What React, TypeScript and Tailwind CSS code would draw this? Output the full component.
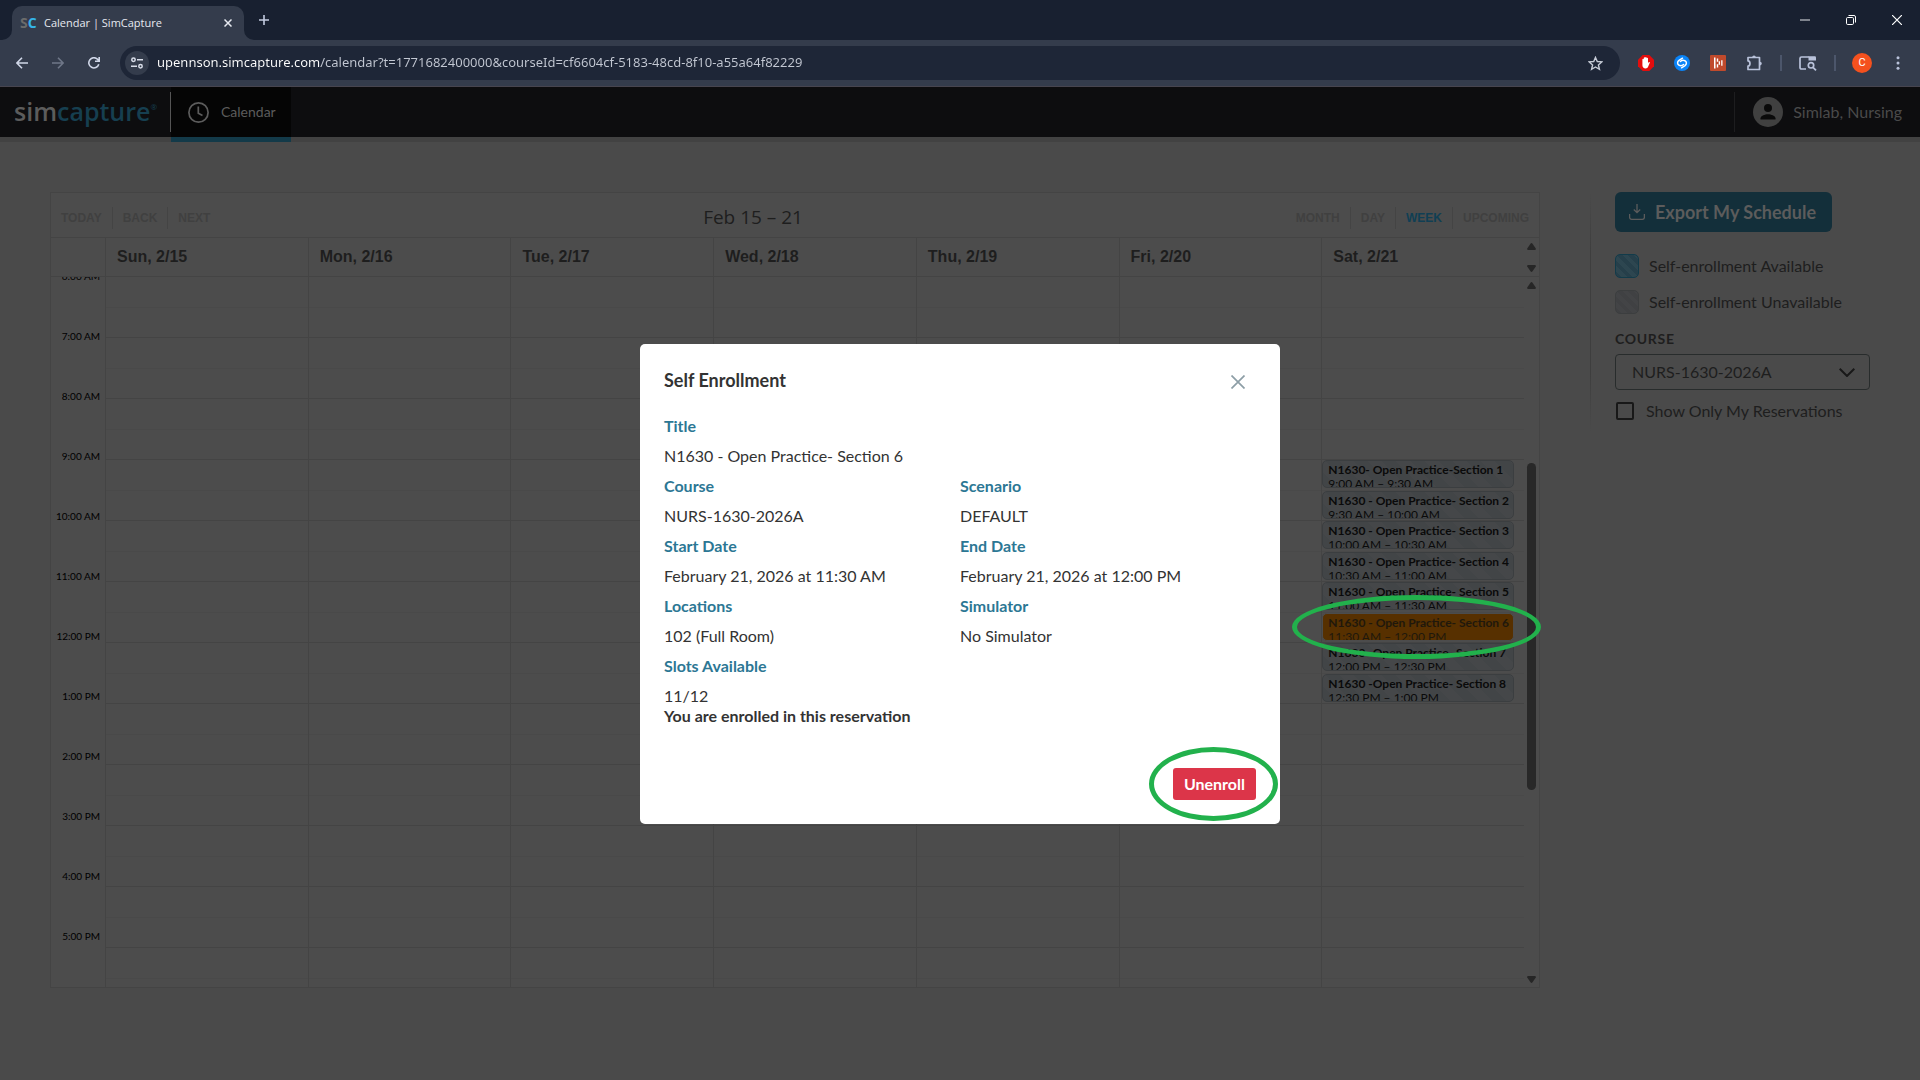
import React from "react";

const DAYS = ["Sun, 2/15", "Mon, 2/16", "Tue, 2/17", "Wed, 2/18", "Thu, 2/19", "Fri, 2/20", "Sat, 2/21"];

const HOURS = [
  "6:00 AM", "7:00 AM", "8:00 AM", "9:00 AM", "10:00 AM", "11:00 AM",
  "12:00 PM", "1:00 PM", "2:00 PM", "3:00 PM", "4:00 PM", "5:00 PM",
];

type Booking = { title: string; time: string; mine?: boolean };

// Keyed by half-hour slot, counted from 6:00 AM.
const SATURDAY: Record<number, Booking> = {
  6: { title: "N1630- Open Practice-Section 1", time: "9:00 AM – 9:30 AM" },
  7: { title: "N1630 - Open Practice- Section 2", time: "9:30 AM – 10:00 AM" },
  8: { title: "N1630 - Open Practice- Section 3", time: "10:00 AM – 10:30 AM" },
  9: { title: "N1630 - Open Practice- Section 4", time: "10:30 AM – 11:00 AM" },
  10: { title: "N1630 - Open Practice- Section 5", time: "11:00 AM – 11:30 AM" },
  11: { title: "N1630 - Open Practice- Section 6", time: "11:30 AM – 12:00 PM", mine: true },
  12: { title: "N1630 -Open Practice- Section 7", time: "12:00 PM – 12:30 PM" },
  13: { title: "N1630 -Open Practice- Section 8", time: "12:30 PM – 1:00 PM" },
};

function TabStrip() {
  return (
    <div className="flex h-10 items-end bg-[#182030] pl-3">
      <div className="relative flex h-[34px] w-[232px] items-center rounded-t-[10px] bg-[#343c4c] pr-2 pl-2">
        <svg className="absolute bottom-0 -left-[10px] size-[10px] text-[#343c4c]" viewBox="0 0 10 10" fill="currentColor">
          <path d="M10 0v10H0A10 10 0 0 0 10 0z" />
        </svg>
        <svg className="absolute -right-[10px] bottom-0 size-[10px] text-[#343c4c]" viewBox="0 0 10 10" fill="currentColor">
          <path d="M0 0v10h10A10 10 0 0 1 0 0z" />
        </svg>
        <span className="w-6 font-['Open_Sans',sans-serif] text-sm leading-4 font-bold text-[#6b6b6b]">
          S<span className="text-[#35b4e8]">C</span>
        </span>
        <span className="flex-1 font-['Open_Sans',sans-serif] text-[11px] leading-4 text-[#e6e9f0]">Calendar | SimCapture</span>
        <button aria-label="Close tab" className="flex size-4 items-center justify-center text-[#e6e9f0]">
          <svg className="size-2" viewBox="0 0 8 8" stroke="currentColor" strokeWidth="1.5">
            <path d="M.5.5l7 7M7.5.5l-7 7" />
          </svg>
        </button>
      </div>
      <button aria-label="New tab" className="ml-[10px] flex h-10 w-5 items-center justify-center text-[#c3cbe0]">
        <svg className="size-[10px]" viewBox="0 0 10 10" stroke="currentColor" strokeWidth="1.6">
          <path d="M5 0v10M0 5h10" />
        </svg>
      </button>
      <div className="ml-auto flex h-10">
        <button aria-label="Minimize" className="flex w-[46px] items-center justify-center">
          <svg className="h-[10px] w-[10px]" viewBox="0 0 10 10" stroke="#9a9ea6" strokeWidth="1.6">
            <path d="M0 5h10" />
          </svg>
        </button>
        <button aria-label="Restore" className="flex w-[46px] items-center justify-center">
          <svg className="size-[10px]" viewBox="0 0 10 10" fill="none" stroke="#fff" strokeWidth="1">
            <rect x=".5" y="2.5" width="7" height="7" rx="1.2" />
            <path d="M2.5.5H8A1.5 1.5 0 0 1 9.500 2v5.500" />
          </svg>
        </button>
        <button aria-label="Close window" className="flex w-[46px] items-center justify-center">
          <svg className="size-[10px]" viewBox="0 0 10 10" stroke="#fff" strokeWidth="1.2">
            <path d="M0 0l10 10M10 0L0 10" />
          </svg>
        </button>
      </div>
    </div>
  );
}

function ToolButton({ label, children }: { label: string; children: React.ReactNode }) {
  return (
    <button aria-label={label} className="flex w-9 shrink-0 items-center justify-center text-[#b9c2da]">
      {children}
    </button>
  );
}

function Separator() {
  return (
    <div className="flex w-[18px] shrink-0 items-center justify-center">
      <div className="h-4 w-[2px] bg-[#4c566b]" />
    </div>
  );
}

function Toolbar() {
  return (
    <div className="flex h-[47px] border-b border-[#47454f] bg-[#343c4c] pr-1 pl-1">
      <ToolButton label="Back">
        <svg className="size-3" viewBox="0 0 12 12" fill="none" stroke="#d0d7e8" strokeWidth="1.6">
          <path d="M12 6H1M6 .7L.9 6 6 11.300" />
        </svg>
      </ToolButton>
      <ToolButton label="Forward">
        <svg className="size-3" viewBox="0 0 12 12" fill="none" stroke="#6f7788" strokeWidth="1.6">
          <path d="M0 6h11M6 .7L11.100 6 6 11.300" />
        </svg>
      </ToolButton>
      <ToolButton label="Reload">
        <svg className="size-3" viewBox="0 0 12 12" fill="none" stroke="#d0d7e8" strokeWidth="1.6">
          <path d="M10.800 7.300A5.100 5.100 0 1 1 9.800 2.500L11 4M11.200 0v4.300H7" />
        </svg>
      </ToolButton>
      <div className="mx-2 my-[6px] flex flex-1 items-center rounded-full bg-[#1e2637] px-[5px]">
        <button aria-label="Site information" className="flex size-6 items-center justify-center rounded-full bg-[#343c4c]">
          <svg className="size-3" viewBox="0 0 12 12" fill="none" stroke="#d9deea" strokeWidth="1.5">
            <circle cx="2.500" cy="2.800" r="1.700" />
            <path d="M6 2.800h6M0 9.200h6" />
            <circle cx="9.500" cy="9.200" r="1.700" />
          </svg>
        </button>
        <input
          aria-label="Address"
          readOnly
          value="upennson.simcapture.com/calendar?t=1771682400000&courseId=cf6604cf-5183-48cd-8f10-a55a64f82229"
          className="ml-2 flex-1 bg-[linear-gradient(90deg,#ffffff_164px,#c3c8d3_164px)] bg-clip-text font-['Noto_Sans',sans-serif] text-[13px] text-transparent outline-none"
        />
        <button aria-label="Bookmark" className="mr-3 flex size-4 items-center justify-center">
          <svg className="size-[15px]" viewBox="0 0 16 16" fill="none" stroke="#c6cbd6" strokeWidth="1.500">
            <path d="M8 1.500l1.900 4.400 4.800.4-3.600 3.200 1.100 4.700L8 11.700l-4.200 2.500 1.100-4.700L1.300 6.300l4.800-.4z" />
          </svg>
        </button>
      </div>
      <ToolButton label="Ad blocker">
        <svg className="size-4" viewBox="0 0 16 16">
          <path d="M4.700 0h6.600L16 4.700v6.600L11.300 16H4.700L0 11.300V4.700z" fill="#e40d0d" />
          <path
            d="M4.400 8.800V4.500a.7.7 0 0 1 1.400 0V3a.7.7 0 0 1 1.400 0v-.4a.7.7 0 0 1 1.400 0V3.500a.7.7 0 0 1 1.400 0v4.800l.8-1.200c.4-.5 1.300 0 1 .6l-1.700 4c-.5 1.100-1.300 1.700-2.500 1.700-2 0-3.200-1.400-3.200-3.200z"
            fill="#fff"
          />
        </svg>
      </ToolButton>
      <ToolButton label="Music finder">
        <svg className="size-4" viewBox="0 0 16 16" fill="none">
          <circle cx="8" cy="8" r="8" fill="#0a84f8" />
          <g stroke="#fff" strokeWidth="1.500" strokeLinecap="round">
            <path d="M9.600 9.500C8.500 10.400 6.800 11 5.200 10.300 3 9.200 3.200 6.600 5 5.400L8.500 3.200" />
            <path d="M6.400 6.500C7.500 5.600 9.200 5 10.800 5.700 13 6.800 12.800 9.400 11 10.600L7.500 12.800" />
          </g>
        </svg>
      </ToolButton>
      <ToolButton label="Extension">
        <svg className="size-4" viewBox="0 0 16 16">
          <rect width="16" height="16" rx="1" fill="#c04a2c" />
          <path d="M4 2.500h1.500v11H4zM6.800 3.500h1.400v3.200H6.800zM6.800 9.300h1.400v3.200H6.800zM8.700 6.200h1.300v3.600H8.700zM11.200 5.200h1.300v5.600h-1.300z" fill="#fff" />
        </svg>
      </ToolButton>
      <ToolButton label="Extensions">
        <svg className="ml-[2px] size-4" viewBox="0 0 16 16" fill="none" stroke="currentColor" strokeWidth="1.700">
          <path d="M1 2.500h11.500v12H1v-3.400c2.600-.2 2.600-5 0-5.200z" strokeLinejoin="round" />
          <path d="M5.200 2.200a1.800 1.800 0 0 1 3.600 0zM13 6.800a1.800 1.800 0 0 1 0 3.600z" fill="currentColor" stroke="none" />
        </svg>
      </ToolButton>
      <Separator />
      <ToolButton label="Search this page">
        <svg className="h-4 w-[18px]" viewBox="0 0 18 16" fill="none" stroke="currentColor" strokeWidth="1.700">
          <path d="M7 14H2.500A1.500 1.500 0 0 1 1 12.500v-9A1.500 1.500 0 0 1 2.500 2H10" />
          <path d="M9.500 1.200h6.300a1.200 1.200 0 0 1 1.200 1.200v3H9.500z" fill="currentColor" stroke="none" />
          <circle cx="12" cy="10.300" r="2.700" />
          <path d="M14 12.300l3 3" />
        </svg>
      </ToolButton>
      <Separator />
      <ToolButton label="Profile">
        <span className="flex size-5 items-center justify-center rounded-full bg-[#f4511e] font-['Roboto',sans-serif] text-[11px] text-white">C</span>
      </ToolButton>
      <ToolButton label="Menu">
        <svg className="h-[14px] w-1" viewBox="0 0 4 14" fill="currentColor">
          <circle cx="2" cy="1.700" r="1.500" />
          <circle cx="2" cy="7" r="1.500" />
          <circle cx="2" cy="12.300" r="1.500" />
        </svg>
      </ToolButton>
    </div>
  );
}

function SiteHeader() {
  return (
    <header className="flex h-[55px] border-b-[5px] border-[#424242] bg-[#0d0d0f]">
      <a href="#" className="flex w-[155px] items-center pb-[2px] pl-[14px] font-['Open_Sans',sans-serif] text-[25px] leading-none font-semibold text-[#5c5c5c]">
        sim<span className="text-[#163f50]">capture</span>
        <sup className="text-[8px] font-normal text-[#163f50]">®</sup>
      </a>
      <div className="my-[5px] ml-[15px] w-px bg-[#555555]" />
      <a href="#" className="-mb-[5px] flex items-center border-b-[5px] border-[#133a49] bg-[#050505] pr-[15px] pl-[17px] text-sm text-[#5c5c5c]">
        <svg className="mr-3 size-[21px]" viewBox="0 0 21 21" fill="none" stroke="currentColor" strokeWidth="1.700">
          <circle cx="10.500" cy="10.500" r="9.600" />
          <path d="M10.300 4.500v6.800l4.200 2.200" />
        </svg>
        Calendar
      </a>
      <div className="my-[5px] ml-auto w-px bg-[#1d1d1f]" />
      <button className="flex items-center gap-[10px] pr-[18px] pl-[18px] text-base text-[#4a4a4a]">
        <svg className="size-[30px]" viewBox="0 0 30 30">
          <circle cx="15" cy="15" r="15" fill="#404040" />
          <circle cx="15" cy="11" r="4" fill="#0a0a0a" />
          <path d="M7.500 22.500v-1.200c0-2.400 4.500-4 7.500-4s7.500 1.600 7.500 4v1.200z" fill="#0a0a0a" />
        </svg>
        Simlab, Nursing
      </button>
    </header>
  );
}

function Arrow({ down }: { down?: boolean }) {
  return (
    <svg className="h-[7px] w-[9px] shrink-0" viewBox="0 0 9 7" fill="#262626">
      {down ? (
        <path d="M1 0h7q1 .2.800 1.400L5.500 6.300q-1 1.200-2 0L.2 1.400Q0 .2 1 0z" />
      ) : (
        <path d="M1 7h7q1-.2.800-1.400L5.500.7q-1-1.200-2 0L.2 5.600Q0 6.800 1 7z" />
      )}
    </svg>
  );
}

function NavButton({ children, active }: { children: string; active?: boolean }) {
  return (
    <button
      className={
        "h-[22px] border-r border-[#444444] px-[10px] text-xs font-bold last:border-r-0 " +
        (active ? "text-[#103f54]" : "text-[#404040]")
      }
    >
      {children}
    </button>
  );
}

function EventCard({ event }: { event: Booking }) {
  return (
    <button
      className={
        "mr-[10px] block h-7 w-[calc(100%-10px)] overflow-hidden rounded-[5px] border px-[5px] pt-[2px] text-left text-xs leading-[14px] whitespace-nowrap " +
        (event.mine
          ? "border-[#4c4c4c] bg-[#573000] text-[#20180c]"
          : "border-[#3b3e40] bg-[repeating-linear-gradient(45deg,#424547_0_10px,#454749_10px_20px)] text-[#0a0a0a]")
      }
    >
      <span className="block font-bold">{event.title}</span>
      <span className="block">{event.time}</span>
    </button>
  );
}

function DayColumn({ day }: { day: number }) {
  return (
    <div className="border-l border-[#444444]">
      {HOURS.map((hour, i) => (
        <div key={hour}>
          {[0, 1].map((half) => {
            const event = day === 6 ? SATURDAY[i * 2 + half] : undefined;
            return (
              <div key={half} className={half === 0 ? "h-[31px] border-b border-[#494949]" : "h-[30px] border-b border-[#444444]"}>
                {event && <EventCard event={event} />}
              </div>
            );
          })}
        </div>
      ))}
    </div>
  );
}

function WeekCalendar() {
  return (
    <section aria-label="Week calendar" className="relative min-w-0 flex-1 self-start">
      <div className="border border-[#444444] bg-[#4c4c4c]">
        <div className="flex border-b border-[#444444] pt-[14px] pb-2 font-['Liberation_Sans',sans-serif]">
          <div className="flex">
            <NavButton>TODAY</NavButton>
            <NavButton>BACK</NavButton>
            <NavButton>NEXT</NavButton>
          </div>
          <h1 className="flex-1 text-center font-['Open_Sans',sans-serif] text-[19px] leading-5 text-[#1e1e1e]">Feb 15 – 21</h1>
          <div className="flex">
            <NavButton>MONTH</NavButton>
            <NavButton>DAY</NavButton>
            <NavButton active>WEEK</NavButton>
            <NavButton>UPCOMING</NavButton>
          </div>
        </div>
        <div className="flex border-b border-[#444444]">
          <div className="w-[54px]" />
          <div className="grid flex-1 grid-cols-7">
            {DAYS.map((d) => (
              <div key={d} className="border-l border-[#444444] py-[7px] pl-[11px] font-['Liberation_Sans',sans-serif] text-base font-bold text-[#1e1e1e]">
                {d}
              </div>
            ))}
          </div>
          <div className="flex w-[15px] flex-col items-center justify-between pt-[5px] pb-1">
            <Arrow />
            <Arrow down />
          </div>
        </div>
        <div className="flex h-[710px] overflow-hidden">
          <div className="-mt-2 w-[54px] pr-[5px] text-right text-[10px] leading-[14px] text-black">
            {HOURS.map((h) => (
              <div key={h} className="h-[60px]">{h}</div>
            ))}
          </div>
          <div className="grid flex-1 grid-cols-7">
            {DAYS.map((d, i) => (
              <DayColumn key={d} day={i} />
            ))}
          </div>
          <div className="flex w-[15px] flex-col items-center pt-[5px] pb-1">
            <Arrow />
            <div className="mt-[174px] mb-auto h-[327px] w-[9px] rounded-full bg-[#282828]" />
            <Arrow down />
          </div>
        </div>
      </div>
      <div className="pointer-events-none absolute top-[403px] -right-px h-16 w-[249px] rounded-[50%] border-[5px] border-[#22b14c]" />
    </section>
  );
}

function Sidebar() {
  return (
    <aside className="relative w-[280px] shrink-0 pl-[25px] text-base leading-6 text-[#1e1e1e]">
      <div className="absolute top-0 left-0 h-60 w-px bg-[linear-gradient(180deg,transparent,#3e3e3e_25%,#3e3e3e_75%,transparent)]" />
      <button className="flex h-10 items-center gap-[10px] rounded-md bg-[#132f3a] pr-4 pl-[14px] text-lg font-bold text-[#5c5c5c]">
        <svg className="size-4" viewBox="0 0 16 16" fill="none" stroke="currentColor" strokeWidth="1.300">
          <path d="M8 0v8.500M4.800 5.500L8 8.700l3.200-3.200M.6 10v3.300a2 2 0 0 0 2 2h10.800a2 2 0 0 0 2-2V10" />
        </svg>
        Export My Schedule
      </button>
      <div className="mt-[22px] flex items-center gap-[10px]">
        <div className="size-6 rounded-[5px] border border-[#123b4a] bg-[repeating-linear-gradient(45deg,#263f4a_0_4px,#2d4650_4px_8px)]" />
        Self-enrollment Available
      </div>
      <div className="mt-3 flex items-center gap-[10px]">
        <div className="size-6 rounded-[5px] border border-[#3c3e3f] bg-[repeating-linear-gradient(45deg,#404143_0_4px,#434446_4px_8px)]" />
        Self-enrollment Unavailable
      </div>
      <label htmlFor="course" className="mt-[15px] block text-sm leading-5 font-bold tracking-wider">COURSE</label>
      <div className="relative mt-[5px]">
        <select id="course" className="h-9 w-full appearance-none rounded border border-[#282c2c] bg-transparent px-4 leading-6 text-[#1e1e1e]">
          <option>NURS-1630-2026A</option>
        </select>
        <svg className="pointer-events-none absolute top-[14px] right-[15px] h-[9px] w-4" viewBox="0 0 16 9" fill="none" stroke="#181818" strokeWidth="2">
          <path d="M.7.8L8 8 15.300.8" />
        </svg>
      </div>
      <label className="mt-[9px] flex items-center gap-3">
        <input type="checkbox" className="ml-px size-[18px] appearance-none rounded-[2px] border-2 border-[#181818]" />
        Show Only My Reservations
      </label>
    </aside>
  );
}

function Field({ label, value, wide }: { label: string; value: string; wide?: boolean }) {
  return (
    <div className={wide ? "col-span-2" : ""}>
      <dt className="mb-[10px] font-bold text-[#2c7794]">{label}</dt>
      <dd>{value}</dd>
    </div>
  );
}

function EnrollmentDialog() {
  return (
    <div className="absolute inset-0 flex items-center justify-center">
      <div role="dialog" aria-labelledby="dialog-title" className="w-[640px] max-w-full rounded-[5px] bg-white p-6 text-base leading-5 text-[#333333]">
        <div className="flex items-end justify-between pr-[11px]">
          <h2 id="dialog-title" className="pb-[2px] text-lg leading-6 font-bold">Self Enrollment</h2>
          <button aria-label="Close" className="pb-[5px] text-[#8d9ea6]">
            <svg className="size-[14px]" viewBox="0 0 14 14" stroke="currentColor" strokeWidth="1.700">
              <path d="M.5.500l13 13M13.500.500l-13 13" />
            </svg>
          </button>
        </div>
        <dl className="mt-[22px] grid grid-cols-2 gap-y-[10px]">
          <Field label="Title" value="N1630 - Open Practice- Section 6" wide />
          <Field label="Course" value="NURS-1630-2026A" />
          <Field label="Scenario" value="DEFAULT" />
          <Field label="Start Date" value="February 21, 2026 at 11:30 AM" />
          <Field label="End Date" value="February 21, 2026 at 12:00 PM" />
          <Field label="Locations" value="102 (Full Room)" />
          <Field label="Simulator" value="No Simulator" />
          <Field label="Slots Available" value="11/12" wide />
        </dl>
        <p className="font-bold">You are enrolled in this reservation</p>
        <div className="mt-[42px] flex justify-end">
          <div className="relative">
            <button className="h-8 rounded-[3px] bg-[#dc3549] px-[11px] font-bold text-white">Unenroll</button>
            <div className="pointer-events-none absolute -top-[21px] -right-[22px] -left-[24px] h-[74px] rounded-[50%] border-[5px] border-[#22b14c]" />
          </div>
        </div>
      </div>
    </div>
  );
}

export default function App() {
  return (
    <div className="flex min-h-screen flex-col bg-[#4a4a4a] font-['Lato',sans-serif]">
      <TabStrip />
      <Toolbar />
      <div className="relative flex flex-1 flex-col">
        <SiteHeader />
        <main className="flex gap-[50px] px-[50px] pt-[50px]">
          <WeekCalendar />
          <Sidebar />
        </main>
        <EnrollmentDialog />
      </div>
    </div>
  );
}
